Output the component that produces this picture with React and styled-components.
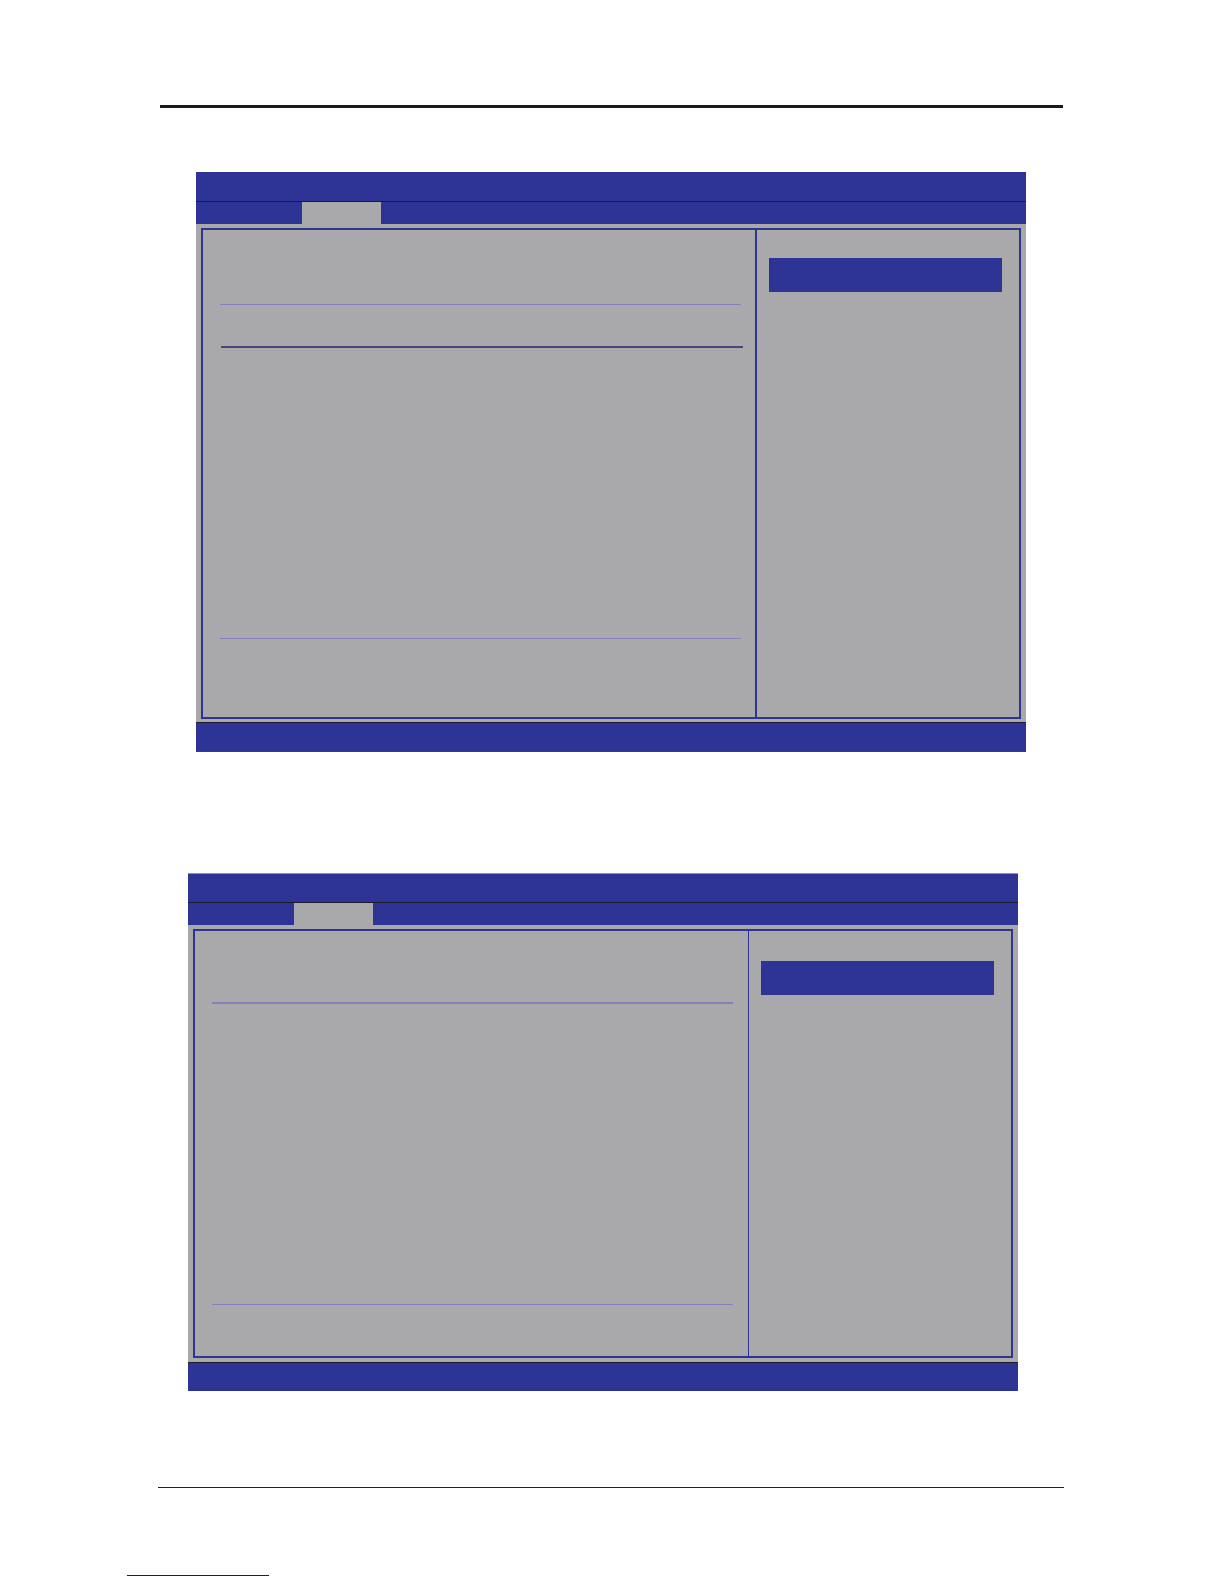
import React from "react";
import styled, { createGlobalStyle } from "styled-components";

const blue = "#2e3495";
const frameBlue = "#2e358c";
const grey = "#a9a9ab";
const ink = "#1d1b2c";

const GlobalStyle = createGlobalStyle`
  * { box-sizing: border-box; }
  body {
    margin: 0;
    background: #ffffff;
    font-family: "Liberation Sans", Arial, sans-serif;
  }
`;

const Page = styled.div`
  display: flex;
  flex-direction: column;
  min-height: 100vh;
  padding-bottom: 8px;
`;

const PageHeader = styled.header`
  margin: 105px 161px 0 160px;
  border-top: 3px solid #1b191c;
`;

const Screens = styled.main`
  display: flex;
  flex-direction: column;
  gap: 121px;
  padding: 64px 198px 96px 188px;
`;

const Screen = styled.article`
  display: flex;
  flex-direction: column;
  margin-left: ${(p) => (p.$shifted ? "8px" : "0")};
  margin-right: ${(p) => (p.$shifted ? "0" : "8px")};
  background: ${grey};
`;

const TitleBar = styled.header`
  height: 30px;
  background: ${blue};
  border-top: 1px solid ${(p) => p.$edge};
  border-bottom: 1px solid ${ink};
`;

const TabBar = styled.nav`
  display: flex;
  height: 22px;
  background: ${blue};
`;

const Tab = styled.button`
  width: ${(p) => p.$width};
  padding: 0;
  border: 0;
  background: ${(p) => (p.$active ? grey : blue)};
`;

const Frame = styled.div`
  display: flex;
  margin: 4px 5px ${(p) => p.$gap};
  border: 2px solid ${frameBlue};
`;

const Settings = styled.div`
  flex: 1;
  display: flex;
  flex-direction: column;
  padding: 0 ${(p) => p.$inset} 0 17px;
`;

const Section = styled.section`
  height: ${(p) => p.$height};
`;

const Rule = styled.hr`
  width: auto;
  margin: ${(p) => (p.$dark ? "0 -2px 0 1px" : "0")};
  border: 0;
  border-top: ${(p) => p.$weight} solid ${(p) => (p.$dark ? "#4d437e" : "#857fbc")};
`;

const HelpPane = styled.aside`
  padding: ${(p) => p.$top} 17px 0 12px;
  border-left: ${(p) => p.$divider} solid ${frameBlue};
`;

const HelpBox = styled.div`
  width: 233px;
  height: 34px;
  background: ${blue};
`;

const StatusBar = styled.footer`
  height: ${(p) => p.$height};
  background: ${blue};
  border-top: 1px solid ${ink};
  border-bottom: 1px solid ${(p) => p.$edge};
`;

const PageFooter = styled.footer`
  margin: 0 160px 87px 158px;
  border-top: 1px solid #231f20;
`;

const FooterLink = styled.a`
  width: 142px;
  margin-left: 127px;
  border-bottom: 1px solid #10109a;
`;

const screens = [
  {
    id: "first",
    shifted: true,
    topEdge: blue,
    bottomEdge: "#4b3580",
    divider: "2px",
    inset: "14px",
    helpTop: "28px",
    gap: "3px",
    footer: "30px",
    sections: [
      { height: "74px", weight: "1px" },
      { height: "41px", weight: "2px", dark: true },
      { height: "290px", weight: "1px" },
      { height: "78px" },
    ],
  },
  {
    id: "second",
    shifted: false,
    topEdge: "#8e90c6",
    bottomEdge: blue,
    divider: "1px",
    inset: "15px",
    helpTop: "30px",
    gap: "4px",
    footer: "29px",
    sections: [
      { height: "71px", weight: "2px" },
      { height: "300px", weight: "1px" },
      { height: "51px" },
    ],
  },
];

function SetupScreen({ screen }) {
  return (
    <Screen $shifted={screen.shifted}>
      <TitleBar $edge={screen.topEdge} />
      <TabBar>
        <Tab type="button" $width="106px" />
        <Tab type="button" $width="79px" $active />
      </TabBar>
      <Frame $gap={screen.gap}>
        <Settings $inset={screen.inset}>
          {screen.sections.map((section, index) => (
            <React.Fragment key={index}>
              <Section $height={section.height} />
              {section.weight && <Rule $weight={section.weight} $dark={section.dark} />}
            </React.Fragment>
          ))}
        </Settings>
        <HelpPane $divider={screen.divider} $top={screen.helpTop}>
          <HelpBox />
        </HelpPane>
      </Frame>
      <StatusBar $height={screen.footer} $edge={screen.bottomEdge} />
    </Screen>
  );
}

export default function App() {
  return (
    <>
      <GlobalStyle />
      <Page>
        <PageHeader />
        <Screens>
          {screens.map((screen) => (
            <SetupScreen key={screen.id} screen={screen} />
          ))}
        </Screens>
        <PageFooter />
        <FooterLink href="#" />
      </Page>
    </>
  );
}
